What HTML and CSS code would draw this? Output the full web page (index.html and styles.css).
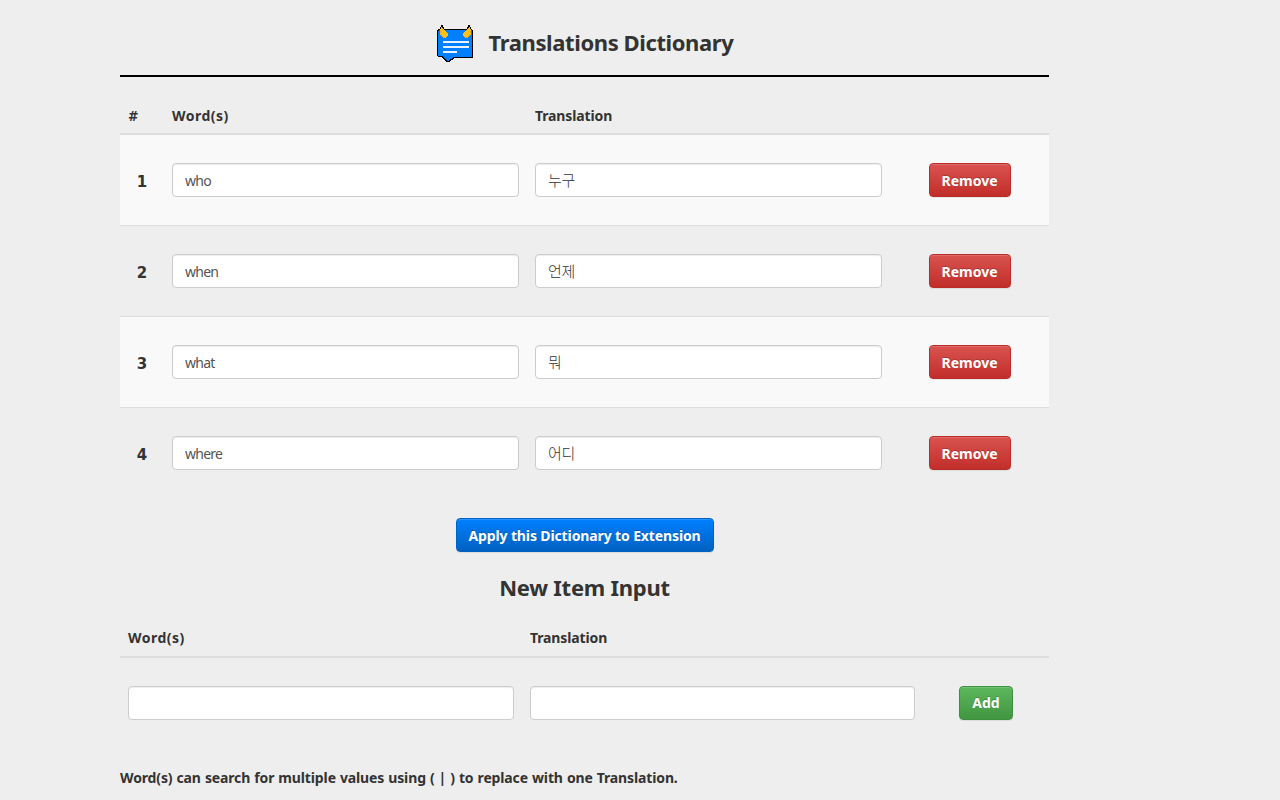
FILE: index.html
```html
<!DOCTYPE html>
<html lang="en">
<head>
<meta charset="utf-8">
<title>Translations Dictionary</title>
<link rel="stylesheet" href="styles.css">
</head>
<body>
<main class="page">
  <header class="header">
    <svg class="logo" width="38" height="38" viewBox="0 0 38 38" shape-rendering="crispEdges">
      <path d="M2 4H36V5H37V33H18V34H17V35H15V36H14V37H10V36H9V35H8V34H7V33H6V32H2V31H1V5H2Z" fill="#000"/>
      <path d="M3 5H36V32H17V33H16V34H14V35H13V36H11V35H10V34H9V33H8V32H7V31H2V6H3Z" fill="#0080ff"/>
      <path d="M7 17H33M7 22H33M7 27H21" stroke="#e9f2fd" stroke-width="2"/>
      <g id="horn">
        <path d="M5 0H7V2H8V4H9V5H4V2H5Z" fill="#000"/>
        <path d="M5 2H6V3H7V4H8V5H9V6H10V7H11V8H12V11H11V12H10V13H7V12H6V11H5V10H4V4H5Z" fill="#fcc21b"/>
        <path d="M4 6H5V8H4ZM5 9H6V11H7V12H9V13H7V12H6V11H5Z" fill="#e0a52c"/>
      </g>
      <use href="#horn" transform="matrix(-1 0 0 1 39 0)"/>
    </svg>
    <h1 class="title">Translations Dictionary</h1>
  </header>

  <section class="table words">
    <div class="row head"><span class="hash">#</span><span class="word-label">Word(s)</span><span>Translation</span></div>
    <div class="row striped"><b class="num">1</b><input class="field" value="who"><input class="field korean" value="누구"><button class="btn danger">Remove</button></div>
    <div class="row"><b class="num">2</b><input class="field" value="when"><input class="field korean" value="언제"><button class="btn danger">Remove</button></div>
    <div class="row striped"><b class="num">3</b><input class="field" value="what"><input class="field korean" value="뭐"><button class="btn danger">Remove</button></div>
    <div class="row"><b class="num">4</b><input class="field" value="where"><input class="field korean" value="어디"><button class="btn danger">Remove</button></div>
  </section>

  <div class="apply"><button class="btn primary">Apply this Dictionary to Extension</button></div>
  <h2 class="title subtitle">New Item Input</h2>

  <section class="table entry">
    <div class="row head"><span class="word-label">Word(s)</span><span>Translation</span></div>
    <div class="row"><input class="field"><input class="field"><button class="btn success">Add</button></div>
  </section>
  <p class="note">Word(s) can search for multiple values using ( | ) to replace with one Translation.</p>
</main>
</body>
</html>
```
FILE: styles.css
```css
* { box-sizing: border-box; }
body {
  margin: 0;
  background: #eee;
  color: #333;
  font: 14px/20px "Noto Sans", "Noto Sans CJK KR", sans-serif;
  overflow: hidden;
}
.page { width: 929px; margin-left: 120px; }
.header {
  height: 77px;
  padding-top: 25px;
  border-bottom: 2px solid #000;
  display: flex;
  justify-content: center;
  gap: 15px;
}
.logo { flex: none; }
.title {
  margin: 0;
  font-size: 22px;
  line-height: 34px;
  font-weight: 700;
  letter-spacing: -0.4px;
  white-space: nowrap;
}
.row {
  display: grid;
  align-items: center;
  height: 91px;
  border-top: 1px solid #ddd;
}
.words .row { grid-template-columns: 44px 363px 363px 159px; }
.entry .row { grid-template-columns: 402px 401px 126px; }
.table .head {
  height: 58px;
  padding-top: 22px;
  border-top: 0;
  border-bottom: 2px solid #ddd;
  font-weight: 700;
  letter-spacing: -0.13px;
}
.head span { padding-left: 8px; }
.head .word-label { letter-spacing: 0.5px; }
.head .hash { font-family: "DejaVu Sans Condensed", "DejaVu Sans", sans-serif; }
.head + .row { border-top: 0; height: 90px; }
.striped { background: #f9f9f9; }
.num { font: 700 15px "DejaVu Sans", sans-serif; text-align: center; padding-top: 4px; }
.field {
  height: 34px;
  margin: 0 8px;
  min-width: 0;
  padding: 6px 12px;
  border: 1px solid #ccc;
  border-radius: 4px;
  background: #fff;
  box-shadow: inset 0 1px 1px rgba(0, 0, 0, .075);
  color: #555;
  font: 14px/20px "Noto Sans", sans-serif;
  letter-spacing: -0.75px;
}
.korean {
  padding: 5px 12px 7px;
  color: #333;
  font-family: "Noto Sans CJK KR", sans-serif;
  font-weight: 300;
  font-size: 15px;
  letter-spacing: -0.2px;
}
.btn {
  justify-self: center;
  height: 34px;
  padding: 2px 0 0;
  border: 1px solid;
  border-radius: 4px;
  color: #fff;
  font: 700 14px/20px "Noto Sans", sans-serif;
  letter-spacing: 0;
  text-shadow: 0 -1px 0 rgba(0, 0, 0, .2);
  box-shadow: inset 0 1px 0 rgba(255, 255, 255, .15), 0 1px 1px rgba(0, 0, 0, .075);
}
.danger { width: 82px; border-color: #b92c28; background: linear-gradient(#d9534f, #c12e2a); }
.primary { width: 258px; border-color: #0061c2; background: linear-gradient(#0080ff, #0061c2); letter-spacing: -0.12px; }
.success { width: 54px; padding-top: 0; border-color: #3e8f3e; background: linear-gradient(#5cb85c, #419641); }
.apply { display: flex; justify-content: center; padding-top: 20px; }
.subtitle { margin: 18px 0 2px; text-align: center; letter-spacing: -0.25px; }
.entry .head { height: 52px; padding-top: 14px; }
.note { margin: 20px 0 0; font-weight: 700; letter-spacing: -0.13px; word-spacing: 0.55px; white-space: nowrap; }
```
